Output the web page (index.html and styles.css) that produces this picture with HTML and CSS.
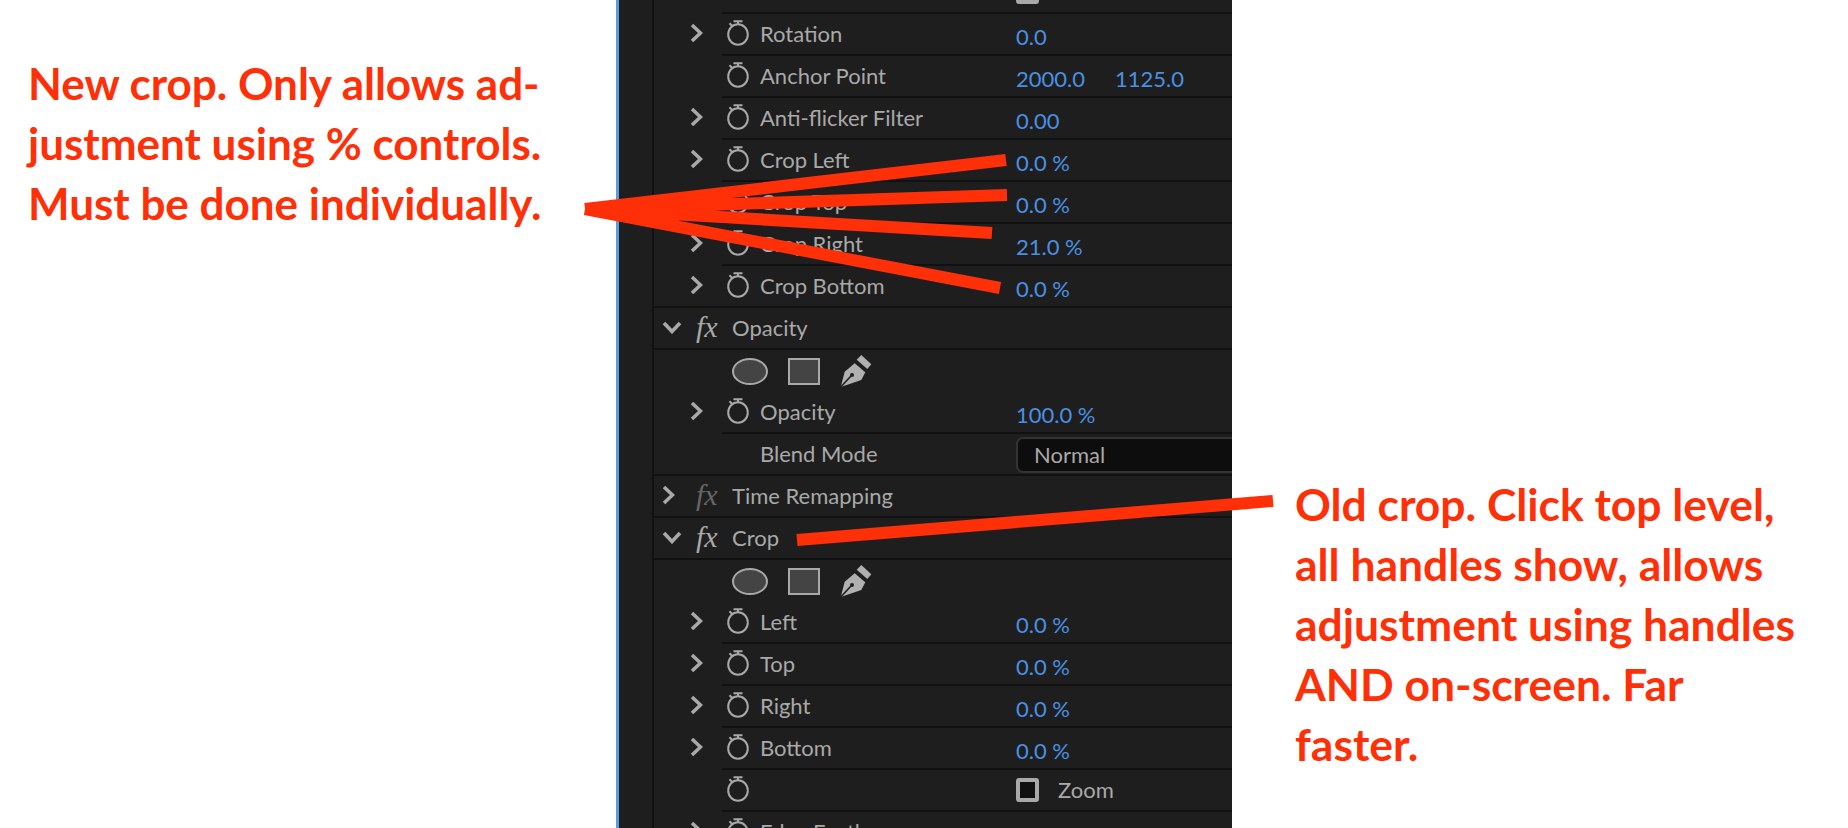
FILE: index.html
```html
<!DOCTYPE html>
<html lang="en">
<head>
    <meta charset="UTF-8">
    <meta name="viewport" content="width=device-width, initial-scale=1.0">
    <title>Crop effect controls</title>
    <link rel="stylesheet" href="styles.css">
</head>
<body>
    <svg width="0" height="0" class="defs">
        <defs>
            <symbol id="watch" viewBox="0 0 22 26">
                <ellipse cx="11" cy="14.5" rx="9.8" ry="10.3" fill="none" stroke="currentColor" stroke-width="2"/>
                <path d="M6.5 1.2H15.5M11 1.2V4.5M2.5 3.2L5.2 6" fill="none" stroke="currentColor" stroke-width="2"/>
            </symbol>
            <symbol id="right" viewBox="0 0 13 20">
                <path d="M2 2L10.5 10L2 18" fill="none" stroke="currentColor" stroke-width="3.6"/>
            </symbol>
            <symbol id="down" viewBox="0 0 20 13">
                <path d="M2 2L10 10.5L18 2" fill="none" stroke="currentColor" stroke-width="3.6"/>
            </symbol>
            <symbol id="pen" viewBox="0 0 32 33">
                <path d="M21.3 0L31.3 9.3L27.3 14L16.7 4.7Z" fill="currentColor"/>
                <path d="M14.7 8.3L25.3 17.3L21.3 25L0.7 32L4.7 16.7Z" fill="currentColor"/>
                <path d="M0.7 32L11 21" stroke="#1e1e1e" stroke-width="1.6"/>
                <circle cx="12" cy="20" r="2" fill="#1e1e1e"/>
            </symbol>
        </defs>
    </svg>

    <div class="note note-left">New crop. Only allows ad-<br>justment using % controls.<br>Must be done individually.</div>

    <div class="panel">
        <div class="gutter"></div>
        <div class="rows">
            <div class="row row-first">
                <div class="twirl"></div>
                <div class="cell">
                    <div class="prop"></div>
                    <span class="check"></span><span class="check-label">Uniform Scale</span>
                </div>
            </div>
            <div class="row">
                <div class="twirl"><svg class="chev"><use href="#right"/></svg></div>
                <div class="cell">
                    <div class="prop"><svg class="watch"><use href="#watch"/></svg><span>Rotation</span></div>
                    <span class="val">0.0</span>
                </div>
            </div>
            <div class="row">
                <div class="twirl"></div>
                <div class="cell">
                    <div class="prop"><svg class="watch"><use href="#watch"/></svg><span>Anchor Point</span></div>
                    <span class="val">2000.0</span><span class="val val-2">1125.0</span>
                </div>
            </div>
            <div class="row">
                <div class="twirl"><svg class="chev"><use href="#right"/></svg></div>
                <div class="cell">
                    <div class="prop"><svg class="watch"><use href="#watch"/></svg><span>Anti-flicker Filter</span></div>
                    <span class="val">0.00</span>
                </div>
            </div>
            <div class="row">
                <div class="twirl"><svg class="chev"><use href="#right"/></svg></div>
                <div class="cell">
                    <div class="prop"><svg class="watch"><use href="#watch"/></svg><span>Crop Left</span></div>
                    <span class="val">0.0 %</span>
                </div>
            </div>
            <div class="row">
                <div class="twirl"><svg class="chev"><use href="#right"/></svg></div>
                <div class="cell">
                    <div class="prop"><svg class="watch"><use href="#watch"/></svg><span>Crop Top</span></div>
                    <span class="val">0.0 %</span>
                </div>
            </div>
            <div class="row">
                <div class="twirl"><svg class="chev"><use href="#right"/></svg></div>
                <div class="cell">
                    <div class="prop"><svg class="watch"><use href="#watch"/></svg><span>Crop Right</span></div>
                    <span class="val">21.0 %</span>
                </div>
            </div>
            <div class="row row-line">
                <div class="twirl"><svg class="chev"><use href="#right"/></svg></div>
                <div class="cell">
                    <div class="prop"><svg class="watch"><use href="#watch"/></svg><span>Crop Bottom</span></div>
                    <span class="val">0.0 %</span>
                </div>
            </div>

            <div class="row row-line section">
                <svg class="chev-down"><use href="#down"/></svg>
                <span class="fx">fx</span>
                <span>Opacity</span>
            </div>
            <div class="row shapes">
                <span class="shape-oval"></span>
                <span class="shape-rect"></span>
                <svg class="pen"><use href="#pen"/></svg>
            </div>
            <div class="row">
                <div class="twirl"><svg class="chev"><use href="#right"/></svg></div>
                <div class="cell">
                    <div class="prop"><svg class="watch"><use href="#watch"/></svg><span>Opacity</span></div>
                    <span class="val">100.0 %</span>
                </div>
            </div>
            <div class="row row-line">
                <div class="twirl"></div>
                <div class="cell">
                    <div class="prop"><span class="no-watch">Blend Mode</span></div>
                    <div class="select">Normal</div>
                </div>
            </div>
            <div class="row row-line section">
                <svg class="chev-side"><use href="#right"/></svg>
                <span class="fx fx-off">fx</span>
                <span>Time Remapping</span>
            </div>
            <div class="row row-line section">
                <svg class="chev-down"><use href="#down"/></svg>
                <span class="fx">fx</span>
                <span>Crop</span>
            </div>
            <div class="row shapes">
                <span class="shape-oval"></span>
                <span class="shape-rect"></span>
                <svg class="pen"><use href="#pen"/></svg>
            </div>
            <div class="row">
                <div class="twirl"><svg class="chev"><use href="#right"/></svg></div>
                <div class="cell">
                    <div class="prop"><svg class="watch"><use href="#watch"/></svg><span>Left</span></div>
                    <span class="val">0.0 %</span>
                </div>
            </div>
            <div class="row">
                <div class="twirl"><svg class="chev"><use href="#right"/></svg></div>
                <div class="cell">
                    <div class="prop"><svg class="watch"><use href="#watch"/></svg><span>Top</span></div>
                    <span class="val">0.0 %</span>
                </div>
            </div>
            <div class="row">
                <div class="twirl"><svg class="chev"><use href="#right"/></svg></div>
                <div class="cell">
                    <div class="prop"><svg class="watch"><use href="#watch"/></svg><span>Right</span></div>
                    <span class="val">0.0 %</span>
                </div>
            </div>
            <div class="row">
                <div class="twirl"><svg class="chev"><use href="#right"/></svg></div>
                <div class="cell">
                    <div class="prop"><svg class="watch"><use href="#watch"/></svg><span>Bottom</span></div>
                    <span class="val">0.0 %</span>
                </div>
            </div>
            <div class="row">
                <div class="twirl"></div>
                <div class="cell">
                    <div class="prop"><svg class="watch"><use href="#watch"/></svg></div>
                    <span class="check"></span><span class="check-label">Zoom</span>
                </div>
            </div>
            <div class="row">
                <div class="twirl"><svg class="chev"><use href="#right"/></svg></div>
                <div class="cell">
                    <div class="prop"><svg class="watch"><use href="#watch"/></svg><span>Edge Feather</span></div>
                    <span class="val">0</span>
                </div>
            </div>
        </div>
    </div>

    <div class="note note-right">Old crop. Click top level,<br>all handles show, allows<br>adjustment using handles<br>AND on-screen. Far<br>faster.</div>

    <!-- red pointer lines drawn over the panel -->
    <svg class="arrows" width="1848" height="828">
        <path d="M585 209L1006 160M585 209L1007 195M585 209L992 233M585 209L1000 288M797 540L1273 501"/>
    </svg>
</body>
</html>
```

FILE: styles.css
```css
body{
    margin: 0;
    width: 1848px;
    height: 828px;
    overflow: hidden;
    display: flex;
    position: relative;
    background-color: white;
    font-family: "Lato", sans-serif;
}
.defs{
    position: absolute;
}

/* red notes */
.note{
    color: #ff3008;
    font-weight: 700;
    line-height: 60px;
    white-space: nowrap;
}
.note-left{
    width: 616px;
    box-sizing: border-box;
    padding: 53px 0 0 28px;
    flex-shrink: 0;
    font-size: 44px;
}
.note-right{
    padding: 474px 0 0 63px;
    font-size: 44.4px;
}
.arrows{
    position: absolute;
    left: 0;
    top: 0;
}
.arrows path{
    fill: none;
    stroke: #ff3008;
    stroke-width: 12;
}

/* effect controls panel */
.panel{
    width: 616px;
    height: 828px;
    box-sizing: border-box;
    flex-shrink: 0;
    display: flex;
    overflow: hidden;
    border-left: 3px solid #5b9bdc;
    background-color: #1e1e1e;
    color: #a9a9a9;
    font-size: 22px;
}
.gutter{
    width: 33px;
    flex-shrink: 0;
    border-right: 2px solid #111;
}
.rows{
    flex: 1;
    min-width: 0;
}
.row{
    height: 42px;
    box-sizing: border-box;
    display: flex;
    white-space: nowrap;
}
.row-first{
    margin-top: -28px;
}
.twirl{
    width: 68px;
    box-sizing: border-box;
    flex-shrink: 0;
    display: flex;
    align-items: center;
    padding-bottom: 4px;
}
.row-line .twirl{
    padding-bottom: 2px;
}
.chev{
    width: 13px;
    height: 20px;
    margin-left: 36px;
}
.cell{
    flex: 1;
    display: flex;
    align-items: center;
    padding-bottom: 2px;
    border-bottom: 2px solid #111;
}
.row-line{
    border-bottom: 2px solid #111;
}
.row-line .cell{
    border-bottom: none;
}
.prop{
    width: 294px;
    flex-shrink: 0;
    display: flex;
    align-items: center;
}
.watch{
    width: 22px;
    height: 26px;
    margin: 0 11px 0 5px;
}
.no-watch{
    margin-left: 38px;
}
.val{
    color: #4a90e2;
    margin-top: 7px;
}
.val-2{
    margin-left: 30px;
}
.check{
    width: 23px;
    height: 24px;
    box-sizing: border-box;
    margin-top: 2px;
    border: 4px solid #a9a9a9;
    border-radius: 3px;
    background-color: #111;
}
.check-label{
    margin-left: 19px;
}
.select{
    flex: 1;
    height: 32px;
    margin: 3px -20px 0 0;
    padding-left: 16px;
    line-height: 32px;
    border: 2px solid #333;
    border-radius: 7px;
    background-color: #0d0d0d;
}

/* section heads */
.section{
    align-items: center;
    padding-bottom: 2px;
}
.chev-down{
    width: 20px;
    height: 13px;
    margin-left: 8px;
}
.chev-side{
    width: 13px;
    height: 20px;
    margin-left: 8px;
    margin-right: 7px;
}
.fx{
    width: 36px;
    margin-left: 14px;
    font-family: "Liberation Serif", serif;
    font-style: italic;
    font-size: 30px;
}
.fx-off{
    color: #666;
}
.shapes{
    align-items: center;
    padding-left: 78px;
}
.shape-oval{
    width: 36px;
    height: 27px;
    box-sizing: border-box;
    border: 2px solid #a9a9a9;
    border-radius: 50%;
    background-color: #444;
}
.shape-rect{
    width: 32px;
    height: 27px;
    box-sizing: border-box;
    margin-left: 20px;
    border: 2px solid #a9a9a9;
    background-color: #444;
}
.pen{
    width: 32px;
    height: 33px;
    margin-left: 20px;
    color: #b0b0b0;
}
```
